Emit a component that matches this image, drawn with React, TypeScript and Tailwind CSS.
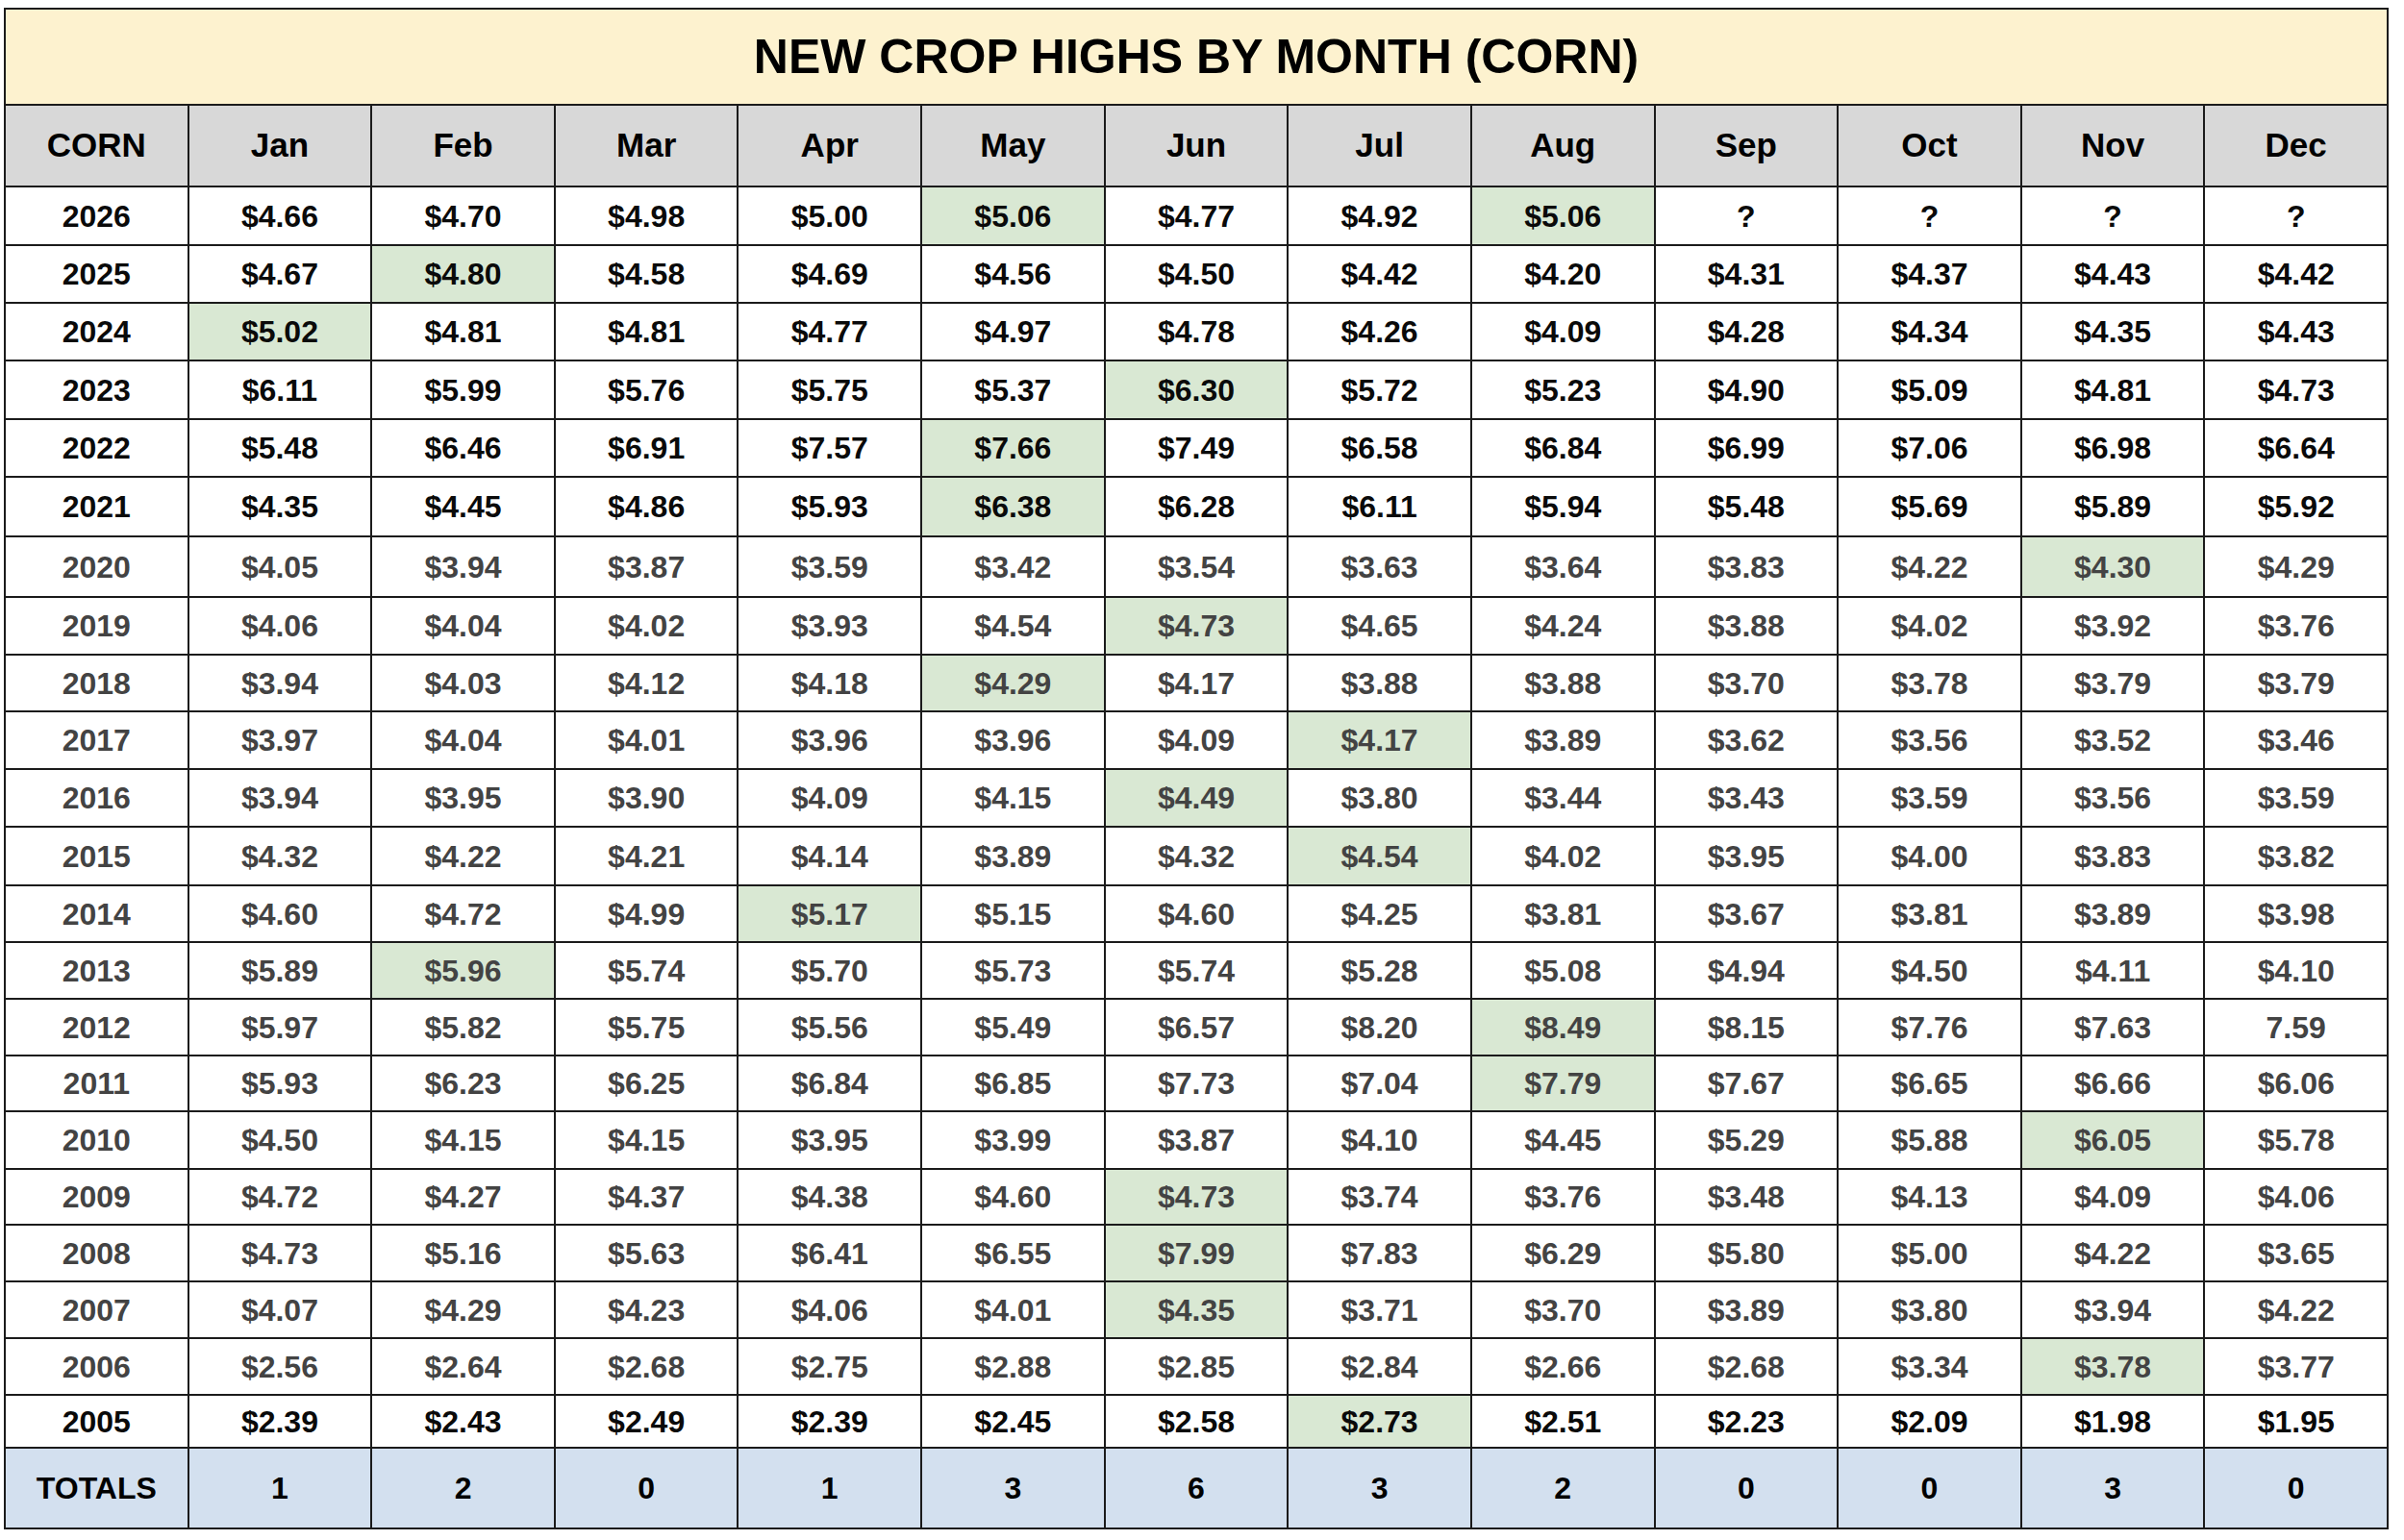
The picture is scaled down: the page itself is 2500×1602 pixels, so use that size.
const months = ["Jan", "Feb", "Mar", "Apr", "May", "Jun", "Jul", "Aug", "Sep", "Oct", "Nov", "Dec"];

type Row = {
  year: string;
  values: string[];
  highs: number[];
  dark: boolean;
  height: string;
};

const p = (s: string) => s.split(" ").map((v) => (v === "?" || v.startsWith("!") ? v.replace("!", "") : `$${v}`));

const rows: Row[] = [
  { year: "2026", values: p("4.66 4.70 4.98 5.00 5.06 4.77 4.92 5.06 ? ? ? ?"), highs: [4, 7], dark: true, height: "h-[59px]" },
  { year: "2025", values: p("4.67 4.80 4.58 4.69 4.56 4.50 4.42 4.20 4.31 4.37 4.43 4.42"), highs: [1], dark: true, height: "h-[58px]" },
  { year: "2024", values: p("5.02 4.81 4.81 4.77 4.97 4.78 4.26 4.09 4.28 4.34 4.35 4.43"), highs: [0], dark: true, height: "h-[58px]" },
  { year: "2023", values: p("6.11 5.99 5.76 5.75 5.37 6.30 5.72 5.23 4.90 5.09 4.81 4.73"), highs: [5], dark: true, height: "h-[59px]" },
  { year: "2022", values: p("5.48 6.46 6.91 7.57 7.66 7.49 6.58 6.84 6.99 7.06 6.98 6.64"), highs: [4], dark: true, height: "h-[58px]" },
  { year: "2021", values: p("4.35 4.45 4.86 5.93 6.38 6.28 6.11 5.94 5.48 5.69 5.89 5.92"), highs: [4], dark: true, height: "h-[60px]" },
  { year: "2020", values: p("4.05 3.94 3.87 3.59 3.42 3.54 3.63 3.64 3.83 4.22 4.30 4.29"), highs: [10], dark: false, height: "h-[61px]" },
  { year: "2019", values: p("4.06 4.04 4.02 3.93 4.54 4.73 4.65 4.24 3.88 4.02 3.92 3.76"), highs: [5], dark: false, height: "h-[58px]" },
  { year: "2018", values: p("3.94 4.03 4.12 4.18 4.29 4.17 3.88 3.88 3.70 3.78 3.79 3.79"), highs: [4], dark: false, height: "h-[57px]" },
  { year: "2017", values: p("3.97 4.04 4.01 3.96 3.96 4.09 4.17 3.89 3.62 3.56 3.52 3.46"), highs: [6], dark: false, height: "h-[58px]" },
  { year: "2016", values: p("3.94 3.95 3.90 4.09 4.15 4.49 3.80 3.44 3.43 3.59 3.56 3.59"), highs: [5], dark: false, height: "h-[58px]" },
  { year: "2015", values: p("4.32 4.22 4.21 4.14 3.89 4.32 4.54 4.02 3.95 4.00 3.83 3.82"), highs: [6], dark: false, height: "h-[59px]" },
  { year: "2014", values: p("4.60 4.72 4.99 5.17 5.15 4.60 4.25 3.81 3.67 3.81 3.89 3.98"), highs: [3], dark: false, height: "h-[57px]" },
  { year: "2013", values: p("5.89 5.96 5.74 5.70 5.73 5.74 5.28 5.08 4.94 4.50 4.11 4.10"), highs: [1], dark: false, height: "h-[57px]" },
  { year: "2012", values: p("5.97 5.82 5.75 5.56 5.49 6.57 8.20 8.49 8.15 7.76 7.63 !7.59"), highs: [7], dark: false, height: "h-[57px]" },
  { year: "2011", values: p("5.93 6.23 6.25 6.84 6.85 7.73 7.04 7.79 7.67 6.65 6.66 6.06"), highs: [7], dark: false, height: "h-[56px]" },
  { year: "2010", values: p("4.50 4.15 4.15 3.95 3.99 3.87 4.10 4.45 5.29 5.88 6.05 5.78"), highs: [10], dark: false, height: "h-[58px]" },
  { year: "2009", values: p("4.72 4.27 4.37 4.38 4.60 4.73 3.74 3.76 3.48 4.13 4.09 4.06"), highs: [5], dark: false, height: "h-[56px]" },
  { year: "2008", values: p("4.73 5.16 5.63 6.41 6.55 7.99 7.83 6.29 5.80 5.00 4.22 3.65"), highs: [5], dark: false, height: "h-[57px]" },
  { year: "2007", values: p("4.07 4.29 4.23 4.06 4.01 4.35 3.71 3.70 3.89 3.80 3.94 4.22"), highs: [5], dark: false, height: "h-[57px]" },
  { year: "2006", values: p("2.56 2.64 2.68 2.75 2.88 2.85 2.84 2.66 2.68 3.34 3.78 3.77"), highs: [10], dark: false, height: "h-[57px]" },
  { year: "2005", values: p("2.39 2.43 2.49 2.39 2.45 2.58 2.73 2.51 2.23 2.09 1.98 1.95"), highs: [6], dark: true, height: "h-[53px]" },
];

const totals = ["1", "2", "0", "1", "3", "6", "3", "2", "0", "0", "3", "0"];

const rowGrid = "grid grid-cols-[repeat(13,minmax(0,1fr))] gap-[2px]";
const cell = "flex items-center justify-center";

export default function App() {
  return (
    <div className="min-h-screen bg-white pl-[4px] pt-[8px] font-['Liberation_Sans',Arial,sans-serif] font-bold">
      <div className="flex w-[2480px] flex-col gap-[2px] bg-[#1b1b1b] p-[2px]">
        <div className={`${cell} h-[98px] bg-[#fdf2cf] text-[50px] text-black`}>
          NEW CROP HIGHS BY MONTH (CORN)
        </div>

        <div className={`${rowGrid} h-[83px] text-[35px] text-black`}>
          <div className={`${cell} bg-[#d8d8d8]`}>CORN</div>
          {months.map((m) => (
            <div key={m} className={`${cell} bg-[#d8d8d8]`}>
              {m}
            </div>
          ))}
        </div>

        {rows.map((row) => (
          <div
            key={row.year}
            className={`${rowGrid} ${row.height} text-[32px] ${row.dark ? "text-[#0a0a0a]" : "text-[#434343]"}`}
          >
            <div className={`${cell} bg-white`}>{row.year}</div>
            {row.values.map((v, i) => (
              <div
                key={i}
                className={`${cell} ${row.highs.includes(i) ? "bg-[#d9e8d3]" : "bg-white"}`}
              >
                {v}
              </div>
            ))}
          </div>
        ))}

        <div className={`${rowGrid} h-[82px] text-[32px] text-black`}>
          <div className={`${cell} bg-[#d3e0ef]`}>TOTALS</div>
          {totals.map((t, i) => (
            <div key={i} className={`${cell} bg-[#d3e0ef]`}>
              {t}
            </div>
          ))}
        </div>
      </div>
    </div>
  );
}
